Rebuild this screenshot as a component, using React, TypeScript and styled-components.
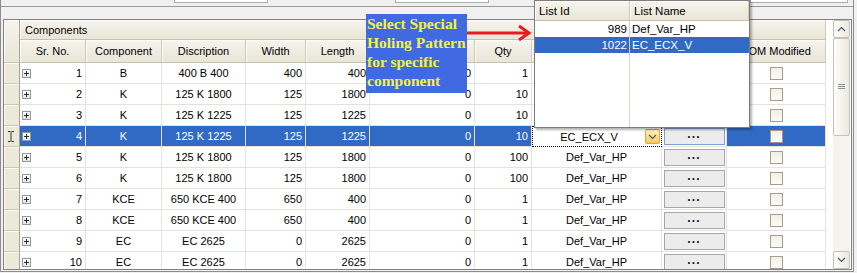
import React from 'react';
import styled, { createGlobalStyle } from 'styled-components';

const GlobalStyle = createGlobalStyle`
  html, body { margin: 0; padding: 0; background: #f0f0f0; }
  body { font-family: "Liberation Sans", Arial, sans-serif; font-size: 11px; color: #000; }
  * { box-sizing: border-box; }
`;

const COLS = '16px 66px 76px 84px 60px 64px 105px 57px 130px 65px 99px';
const SEL = '#316ac5';
const LINE = '#e4e2da';

const Page = styled.div`
  position: relative;
  width: 857px;
  height: 273px;
  overflow: hidden;
  background: #f0f0f0;
`;

const Outer = styled.div`
  width: 854px;
  height: 272px;
  border-left: 1px solid #8d8d8d;
  border-right: 1px solid #8d8d8d;
  border-bottom: 1px solid #8d8d8d;
  display: flex;
  flex-direction: column;
`;

const TopStrip = styled.div`
  height: 7px;
  border-bottom: 1px solid #9a9a9a;
  display: flex;
  align-items: flex-start;
`;

const TopField = styled.div<{ $ml: number; $w: number }>`
  margin-left: ${(p) => p.$ml}px;
  width: ${(p) => p.$w}px;
  height: 3px;
  background: #fff;
  border: 1px solid #a5acb5;
  border-top: none;
`;

const GridFrame = styled.div`
  margin: 12px 0 1px 2px;
  width: 849px;
  flex: 1;
  border: 1px solid #7f8185;
  background: #fff;
  display: flex;
  overflow: hidden;
`;

const Table = styled.div`
  width: 822px;
  display: flex;
  flex-direction: column;
  overflow: hidden;
`;

const Header = styled.div`
  display: grid;
  grid-template-columns: ${COLS};
  grid-template-rows: 20px 23px;
`;

const HeadCell = styled.div<{ $left?: boolean }>`
  display: flex;
  align-items: center;
  justify-content: ${(p) => (p.$left ? 'flex-start' : 'center')};
  padding: 0 ${(p) => (p.$left ? '5px' : '2px')};
  background: linear-gradient(#f6f4ed, #e9e5d7);
  border-right: 1px solid #cfc9b6;
  border-bottom: 1px solid #c7c1ab;
  box-shadow: inset 1px 1px 0 #fdfcf9;
  white-space: nowrap;
  overflow: hidden;
`;

const Corner = styled(HeadCell)`
  grid-row: 1 / 3;
  border-right: 1px solid #a9a391;
`;

const GroupCell = styled(HeadCell)`
  grid-column: 2 / -1;
`;

const Rows = styled.div`
  flex: 1;
  overflow: hidden;
`;

const DataRow = styled.div`
  display: grid;
  grid-template-columns: ${COLS};
  height: 21px;
`;

const RowHead = styled.div`
  background: #ece9d8;
  border-bottom: 1px solid #cbc6b3;
  border-right: 1px solid #a9a391;
  box-shadow: inset 1px 1px 0 #fbfaf6;
`;

const Cell = styled.div<{ $sel?: boolean; $align?: 'left' | 'center' | 'right' }>`
  display: flex;
  align-items: center;
  justify-content: ${(p) =>
    p.$align === 'right' ? 'flex-end' : p.$align === 'left' ? 'flex-start' : 'center'};
  padding: 0 3px;
  background: ${(p) => (p.$sel ? SEL : '#fff')};
  color: ${(p) => (p.$sel ? '#fff' : '#000')};
  border-right: 1px solid ${LINE};
  border-bottom: 1px solid ${LINE};
  white-space: nowrap;
  overflow: hidden;
`;

const SrCell = styled(Cell)`
  justify-content: space-between;
  padding-left: 2px;
`;

const Expander = styled.span`
  position: relative;
  width: 9px;
  height: 9px;
  border: 1px solid #8f9a9b;
  background: linear-gradient(#ffffff, #e6e6e0);
  &::before, &::after {
    content: '';
    position: absolute;
    background: #2a2a2a;
  }
  &::before { left: 1px; top: 3px; width: 5px; height: 1px; }
  &::after { left: 3px; top: 1px; width: 1px; height: 5px; }
`;

const EditCell = styled.div`
  display: flex;
  align-items: center;
  background: #fff;
  border: 1px dotted #000;
  padding: 0 1px 0 0;
`;

const EditText = styled.span`
  flex: 1;
  text-align: center;
`;

const DropBtn = styled.span`
  width: 15px;
  height: 15px;
  border: 1px solid #e2a53c;
  border-radius: 2px;
  background: linear-gradient(#fff1c4, #f8c95e);
  display: flex;
  align-items: center;
  justify-content: center;
`;

const BtnCell = styled.div`
  display: flex;
  align-items: flex-start;
  justify-content: center;
  padding-top: 2px;
  background: #fff;
  border-right: 1px solid ${LINE};
  border-bottom: 1px solid ${LINE};
`;

const DotsButton = styled.span<{ $sel?: boolean }>`
  width: 61px;
  height: 17px;
  background: #ececec;
  border: 1px solid ${(p) => (p.$sel ? '#7d9fd6' : '#a7a7a7')};
  display: flex;
  align-items: center;
  justify-content: center;
  font-weight: bold;
  font-size: 12px;
  letter-spacing: 0.5px;
  color: #111;
`;

const CheckBox = styled.span`
  width: 13px;
  height: 13px;
  border: 1px solid #a39d8a;
  background: linear-gradient(#f1efe6, #fbfaf7);
`;

const ScrollBar = styled.div`
  width: 17px;
  margin-left: 7px;
  display: flex;
  flex-direction: column;
  background: #f4f3ee;
`;

const ScrollBtn = styled.div`
  height: 18px;
  border: 1px solid #c6c2b2;
  border-radius: 2px;
  background: linear-gradient(90deg, #fdfdfb, #ebe8df);
  display: flex;
  align-items: center;
  justify-content: center;
`;

const Thumb = styled(ScrollBtn)`
  height: 98px;
`;

const Track = styled.div`
  flex: 1;
`;

const Popup = styled.div`
  position: absolute;
  left: 534px;
  top: 0;
  width: 216px;
  height: 128px;
  background: #fff;
  border: 1px solid #7c7c7c;
  box-shadow: 2px 2px 2px rgba(0, 0, 0, 0.3);
  display: flex;
  flex-direction: column;
`;

const PopHead = styled.div`
  display: grid;
  grid-template-columns: 95px 1fr;
  height: 20px;
`;

const PopHeadCell = styled.div`
  display: flex;
  align-items: center;
  padding: 0 4px;
  font-size: 11.5px;
  background: linear-gradient(#f6f4ed, #e9e5d7);
  border-right: 1px solid #cfc9b6;
  border-bottom: 1px solid #c7c1ab;
  box-shadow: inset 1px 1px 0 #fdfcf9;
`;

const PopBody = styled.div`
  flex: 1;
  display: grid;
  grid-template-columns: 95px 1fr;
  grid-template-rows: 16px 16px 1fr;
`;

const PopCell = styled.div<{ $sel?: boolean; $right?: boolean }>`
  display: flex;
  align-items: center;
  justify-content: ${(p) => (p.$right ? 'flex-end' : 'flex-start')};
  padding: 0 2px;
  font-size: 11.5px;
  background: ${(p) => (p.$sel ? SEL : '#fff')};
  color: ${(p) => (p.$sel ? '#fff' : '#000')};
  border-right: ${(p) => (p.$right ? '1px solid #d4d0c8' : 'none')};
`;

const Callout = styled.div`
  position: absolute;
  left: 366px;
  top: 14px;
  width: 101px;
  height: 79px;
  background: #4169e1;
  color: #f3f33e;
  font-family: "Liberation Serif", "Times New Roman", serif;
  font-weight: bold;
  font-size: 15.5px;
  line-height: 19px;
  padding: 0 0 0 1px;
  white-space: nowrap;
  overflow: hidden;
`;

const Arrow = styled.svg`
  position: absolute;
  left: 466px;
  top: 24px;
`;

const Cursor = styled.svg`
  position: absolute;
  left: 7px;
  top: 131px;
`;

type Row = [number, string, string, number, number, number, number, string];

const rows: Row[] = [
  [1, 'B', '400 B 400', 400, 400, 0, 1, 'Def_Var_HP'],
  [2, 'K', '125 K 1800', 125, 1800, 0, 10, 'Def_Var_HP'],
  [3, 'K', '125 K 1225', 125, 1225, 0, 10, 'Def_Var_HP'],
  [4, 'K', '125 K 1225', 125, 1225, 0, 10, 'EC_ECX_V'],
  [5, 'K', '125 K 1800', 125, 1800, 0, 100, 'Def_Var_HP'],
  [6, 'K', '125 K 1800', 125, 1800, 0, 100, 'Def_Var_HP'],
  [7, 'KCE', '650 KCE 400', 650, 400, 0, 1, 'Def_Var_HP'],
  [8, 'KCE', '650 KCE 400', 650, 400, 0, 1, 'Def_Var_HP'],
  [9, 'EC', 'EC 2625', 0, 2625, 0, 1, 'Def_Var_HP'],
  [10, 'EC', 'EC 2625', 0, 2625, 0, 1, 'Def_Var_HP'],
];

const Chevron = ({ up }: { up?: boolean }) => (
  <svg width="9" height="6" viewBox="0 0 9 6">
    <polyline
      points={up ? '1,5 4.5,1.5 8,5' : '1,1 4.5,4.5 8,1'}
      fill="none"
      stroke="#4d5766"
      strokeWidth="1.2"
    />
  </svg>
);

export default function App() {
  return (
    <Page>
      <GlobalStyle />
      <Outer>
        <TopStrip>
          <TopField $ml={173} $w={94} />
          <TopField $ml={127} $w={94} />
          <TopField $ml={261} $w={98} />
        </TopStrip>
        <GridFrame>
          <Table>
            <Header>
              <Corner />
              <GroupCell $left>Components</GroupCell>
              <HeadCell>Sr. No.</HeadCell>
              <HeadCell>Component</HeadCell>
              <HeadCell>Discription</HeadCell>
              <HeadCell>Width</HeadCell>
              <HeadCell>Length</HeadCell>
              <HeadCell />
              <HeadCell>Qty</HeadCell>
              <HeadCell />
              <HeadCell />
              <HeadCell>BOM Modified</HeadCell>
            </Header>
            <Rows>
              {rows.map((r) => {
                const sel = r[0] === 4;
                return (
                  <DataRow key={r[0]}>
                    <RowHead />
                    <SrCell $sel={sel}>
                      <Expander />
                      <span>{r[0]}</span>
                    </SrCell>
                    <Cell $sel={sel}>{r[1]}</Cell>
                    <Cell $sel={sel}>{r[2]}</Cell>
                    <Cell $sel={sel} $align="right">{r[3]}</Cell>
                    <Cell $sel={sel} $align="right">{r[4]}</Cell>
                    <Cell $sel={sel} $align="right">{r[5]}</Cell>
                    <Cell $sel={sel} $align="right">{r[6]}</Cell>
                    {sel ? (
                      <EditCell>
                        <EditText>{r[7]}</EditText>
                        <DropBtn>
                          <Chevron />
                        </DropBtn>
                      </EditCell>
                    ) : (
                      <Cell>{r[7]}</Cell>
                    )}
                    <BtnCell>
                      <DotsButton $sel={sel}>···</DotsButton>
                    </BtnCell>
                    <Cell $sel={sel}>
                      <CheckBox />
                    </Cell>
                  </DataRow>
                );
              })}
            </Rows>
          </Table>
          <ScrollBar>
            <ScrollBtn>
              <Chevron up />
            </ScrollBtn>
            <Thumb>
              <svg width="7" height="6" viewBox="0 0 7 6">
                <path d="M0 0.5H7M0 2.5H7M0 4.5H7" stroke="#8b8f97" strokeWidth="1" />
              </svg>
            </Thumb>
            <Track />
            <ScrollBtn>
              <Chevron />
            </ScrollBtn>
          </ScrollBar>
        </GridFrame>
      </Outer>

      <Popup>
        <PopHead>
          <PopHeadCell>List Id</PopHeadCell>
          <PopHeadCell>List Name</PopHeadCell>
        </PopHead>
        <PopBody>
          <PopCell $right>989</PopCell>
          <PopCell>Def_Var_HP</PopCell>
          <PopCell $right $sel>1022</PopCell>
          <PopCell $sel>EC_ECX_V</PopCell>
          <PopCell $right />
          <PopCell />
        </PopBody>
      </Popup>

      <Callout>
        Select Special
        <br />
        Holing Pattern
        <br />
        for specific
        <br />
        component
      </Callout>

      <Arrow width="68" height="18" viewBox="0 0 68 18">
        <path d="M1 9H62" stroke="#e51c23" strokeWidth="3" />
        <polyline points="53,2 63,9 53,16" fill="none" stroke="#e51c23" strokeWidth="3" />
      </Arrow>

      <Cursor width="8" height="11" viewBox="0 0 8 11">
        <path d="M1 0.5H3.5M4.5 0.5H7M4 1V10M1 10.5H3.5M4.5 10.5H7" stroke="#333" strokeWidth="1" />
      </Cursor>
    </Page>
  );
}
